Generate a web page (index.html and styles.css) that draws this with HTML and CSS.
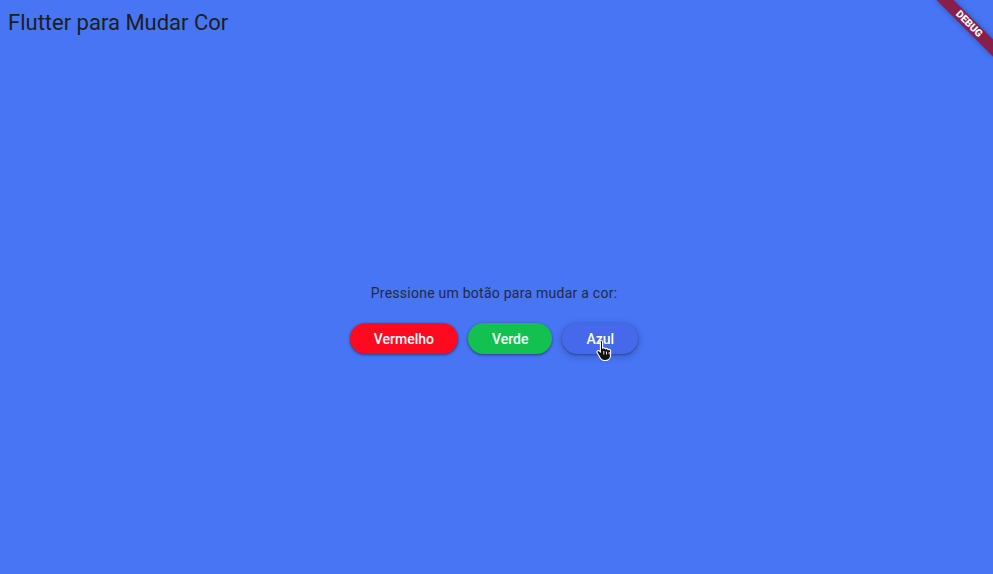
FILE: index.html
```html
<!DOCTYPE html>
<html lang="pt">
<head>
<meta charset="utf-8">
<title>Flutter para Mudar Cor</title>
<link rel="stylesheet" href="styles.css">
</head>
<body>
<div class="app">
  <header class="title">Flutter para Mudar Cor</header>
  <main class="center">
    <p class="prompt">Pressione um botão para mudar a cor:</p>
    <div class="buttons">
      <button class="btn red">Vermelho</button>
      <button class="btn green">Verde</button>
      <button class="btn blue">Azul
        <svg class="cursor" width="17" height="22" viewBox="0 0 17 22">
          <path d="M5 1.5c.9 0 1.6.7 1.6 1.6v6.2c.3-.3.7-.5 1.2-.5.8 0 1.3.5 1.5 1.1.3-.3.7-.5 1.2-.5.8 0 1.4.6 1.5 1.3.3-.2.6-.3 1-.3.9 0 1.6.7 1.6 1.6v4.3c0 2.8-2 5.2-5.1 5.2H8.3c-1.6 0-2.8-.7-3.7-2L1.2 13.7c-.4-.7-.2-1.5.4-1.9.6-.4 1.4-.3 1.9.3l.9 1.1V3.1C3.4 2.2 4.1 1.5 5 1.5z" fill="#111" stroke="#fff" stroke-width="1.1" stroke-linejoin="round"/>
          <path d="M7.8 12v3.5M10.5 12.5v3M13.2 13v2.5" stroke="#fff" stroke-width="0.9" fill="none"/>
        </svg>
      </button>
    </div>
  </main>
  <div class="debug-banner">DEBUG</div>
</div>
</body>
</html>
```

FILE: styles.css
```css
html, body {
  margin: 0;
  padding: 0;
  width: 100%;
  height: 100%;
  overflow: hidden;
}

body {
  background: #4775f4;
  font-family: Roboto, "Noto Sans", sans-serif;
  color: #1d1b20;
}

.app {
  position: relative;
  height: 100%;
  display: flex;
  flex-direction: column;
}

.title {
  font-size: 22px;
  line-height: 28px;
  padding: 9px 8px 0;
  color: #1e1d22;
}

.center {
  flex: 1;
  display: flex;
  flex-direction: column;
  align-items: center;
  justify-content: flex-start;
  padding: 246px 5px 0 0;
}

.prompt {
  margin: 0;
  font-size: 14px;
  line-height: 20px;
  color: #232a44;
  letter-spacing: 0.25px;
}

.buttons {
  display: flex;
  gap: 10px;
  margin-top: 20px;
}

.btn {
  position: relative;
  border: none;
  height: 31px;
  padding: 0 24px;
  border-radius: 16px;
  font-family: Roboto, "Noto Sans", sans-serif;
  font-size: 14px;
  font-weight: 500;
  letter-spacing: 0;
  color: #fff;
  box-shadow: 0 1px 2px rgba(0, 0, 0, 0.3), 0 1px 3px 1px rgba(0, 0, 0, 0.15);
  cursor: pointer;
}

.red { background: #fe0a20; }
.green { background: #12c150; }
.blue {
  background: #4668ea;
  box-shadow: 0 1px 2px rgba(0, 0, 0, 0.3), 0 2px 6px 2px rgba(0, 0, 0, 0.15);
}

.cursor {
  position: absolute;
  left: 34px;
  top: 16px;
}

.debug-banner {
  position: absolute;
  top: 18px;
  right: -16px;
  width: 80px;
  height: 12px;
  transform: rotate(45deg);
  background: #881e4c;
  box-shadow: 0 0 6px rgba(0, 0, 0, 0.3);
  color: #fff;
  font-family: Roboto, "Noto Sans", sans-serif;
  font-size: 10.2px;
  font-weight: 900;
  line-height: 12px;
  text-align: center;
}
```
